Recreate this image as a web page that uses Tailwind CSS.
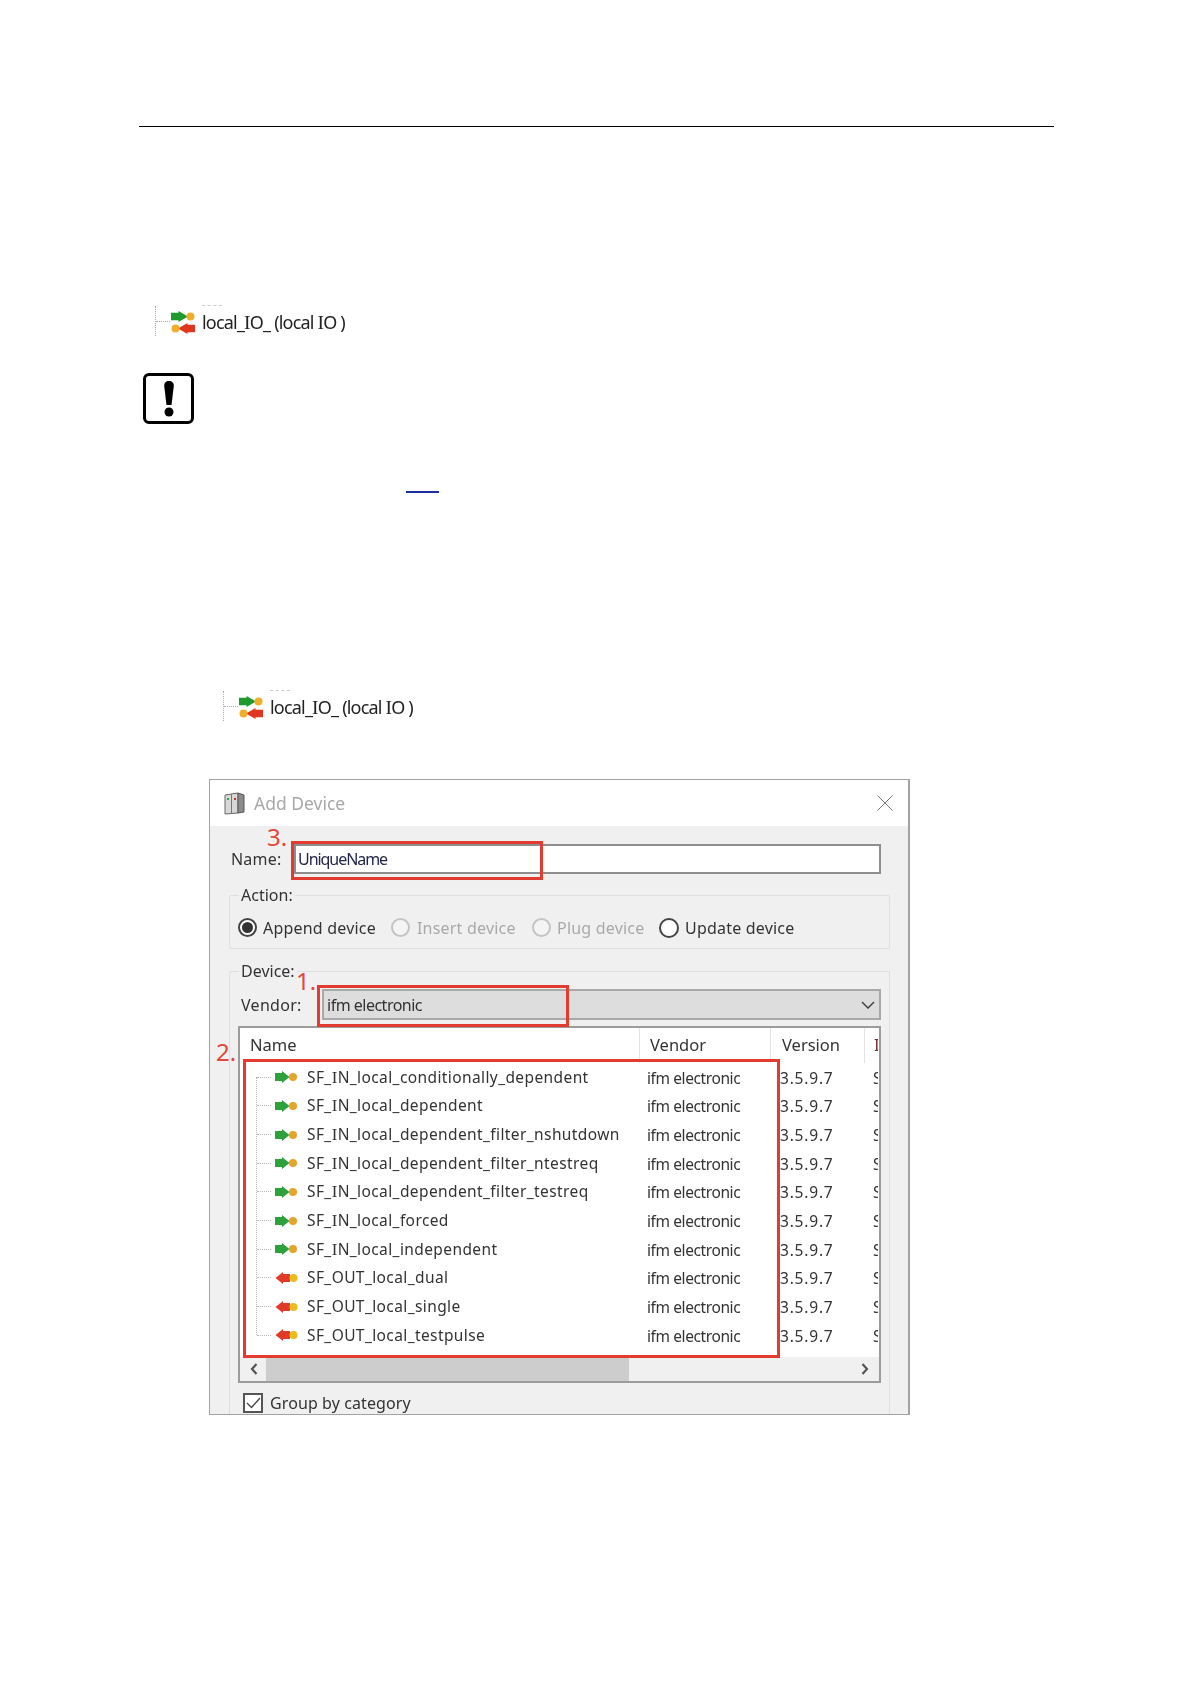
<!DOCTYPE html>
<html lang="en">
<head>
<meta charset="UTF-8">
<meta name="viewport" content="width=device-width, initial-scale=1.0">
<title>Add Device</title>
<script src="https://cdn.jsdelivr.net/npm/@tailwindcss/browser@4"></script>
</head>
<body class="bg-white font-['Noto_Sans',sans-serif]">
<svg class="hidden">
  <symbol id="io-icon" viewBox="0 0 24 24">
    <path d="M0 1.800h7.500V0L17 5.500 7.500 11V9.200H0z" fill="#1f9a2e"/>
    <circle cx="19.500" cy="5.500" r="4" fill="#eeb02a"/>
    <path d="M24 13.800h-7.500V12L7 17.500l9.500 5.500v-1.800H24z" fill="#e0361f"/>
    <circle cx="4.500" cy="17.500" r="4" fill="#eeb02a"/>
  </symbol>
  <symbol id="in-icon" viewBox="0 0 24 12">
    <path d="M1 2h7V0l7.500 6L8 12v-2H1z" fill="#2ba33a"/>
    <circle cx="19" cy="6" r="4" fill="#e3a52c"/>
  </symbol>
  <symbol id="out-icon" viewBox="0 0 24 12">
    <path d="M16 2H9V0L1.500 6 9 12v-2h7z" fill="#e23a2a"/>
    <circle cx="19.500" cy="6" r="4" fill="#e8bb1e"/>
  </symbol>
</svg>

<div class="relative w-[1191px] h-[1683px] overflow-hidden">
  <div class="pt-[126px] px-[139px]">
    <div class="w-[915px] h-px bg-black"></div>
  </div>

  <!-- first tree node -->
  <div class="mt-[179px] ml-[155px] flex items-center h-[30px] border-l border-dotted border-[#aaa] blur-[0.4px]">
    <span class="w-[14px] border-t border-dotted border-[#aaa]"></span>
    <svg class="w-[24px] h-[24px] ml-px mt-[3px]"><use href="#io-icon"/></svg>
    <span class="relative ml-[7px] mt-[3px] text-[18px] text-[#222] tracking-[-0.8px]">local_<span class="font-['Liberation_Serif'] text-[1.08em] leading-none">I</span>O_ (local <span class="font-['Liberation_Serif'] text-[1.08em] leading-none">I</span>O )<span class="absolute left-0 -top-[4px] w-[20px] border-t border-dashed border-[#ccc]"></span></span>
  </div>

  <!-- notice icon and cross reference -->
  <div class="mt-[37px] ml-[143px] w-[51px] h-[51px] border-[3px] border-black rounded-[6px] flex items-center justify-center">
    <svg class="w-[16px] h-[36px]" viewBox="0 0 16 36"><path d="M8 0c3 0 5 2 4.800 5L10.500 24h-5L3.200 5C3 2 5 0 8 0z"/><circle cx="8" cy="31" r="4.500"/></svg>
  </div>
  <div class="mt-[67px] ml-[406px] w-[33px] h-[2px] bg-[#1a2f9c]"></div>

  <!-- second tree node -->
  <div class="mt-[198px] ml-[223px] flex items-center h-[30px] border-l border-dotted border-[#aaa] blur-[0.4px]">
    <span class="w-[14px] border-t border-dotted border-[#aaa]"></span>
    <svg class="w-[24px] h-[24px] ml-px mt-[3px]"><use href="#io-icon"/></svg>
    <span class="relative ml-[7px] mt-[3px] text-[18px] text-[#222] tracking-[-0.8px]">local_<span class="font-['Liberation_Serif'] text-[1.08em] leading-none">I</span>O_ (local <span class="font-['Liberation_Serif'] text-[1.08em] leading-none">I</span>O )<span class="absolute left-0 -top-[4px] w-[20px] border-t border-dashed border-[#ccc]"></span></span>
  </div>

  <!-- Add Device dialog -->
  <div class="mt-[58px] ml-[209px] w-[701px] h-[636px] border border-r-2 border-[#a3a3a3] bg-[#f0f0f0] overflow-hidden blur-[0.4px] text-[#333] text-[16px]">
    <div class="h-[46px] bg-white flex items-center pl-[14px] pr-[15px]">
      <svg class="w-[21px] h-[23px]" viewBox="0 0 21 23">
        <path d="M1 3l13-2v20l-13 1z" fill="#d8d8d8" stroke="#666"/>
        <path d="M14 1l6 2v17l-6 1z" fill="#8c8c8c" stroke="#555"/>
        <path d="M7.500 2v20" stroke="#777"/>
        <rect x="3" y="6" width="2" height="2" fill="#2aa84a"/>
        <rect x="10" y="6" width="2" height="2" fill="#c8342a"/>
      </svg>
      <span class="ml-[9px] text-[17.500px] text-[#a8a8a8]">Add Device</span>
      <svg class="ml-auto w-[16px] h-[16px]" viewBox="0 0 16 16"><path d="M.5.500l15 15M15.500.500l-15 15" stroke="#777" fill="none"/></svg>
    </div>

    <div class="pt-[18px] pl-[21px] pr-[27px] flex items-center">
      <span class="w-[63px] tracking-[0.2px]">Name:</span>
      <div class="flex-1 h-[30px] bg-white border-2 border-[#8e8e8e] flex items-center pl-[2px] text-[#25254a] tracking-[-1.05px]">UniqueName</div>
    </div>

    <fieldset class="mt-[10px] ml-[19px] mr-[18px] h-[65px] border border-[#dfdfdf] rounded-[2px] flex">
      <legend class="ml-[9px] px-[2px] leading-[22px]">Action:</legend>
      <div class="flex items-center h-[43px] pl-[8px] tracking-[0.2px]">
        <span class="w-[19px] h-[19px] rounded-full border-2 border-[#444] bg-white flex items-center justify-center"><span class="w-[11px] h-[11px] rounded-full bg-[#333]"></span></span>
        <span class="ml-[6px] w-[128px]">Append device</span>
        <span class="w-[19px] h-[19px] rounded-full border-2 border-[#c4c4c4] bg-[#f4f4f4]"></span>
        <span class="ml-[7px] w-[115px] text-[#a9a9a9]">Insert device</span>
        <span class="w-[19px] h-[19px] rounded-full border-2 border-[#c4c4c4] bg-[#f4f4f4]"></span>
        <span class="ml-[6px] w-[102px] text-[#a9a9a9]">Plug device</span>
        <span class="w-[20px] h-[20px] rounded-full border-2 border-[#444] bg-white"></span>
        <span class="ml-[6px]">Update device</span>
      </div>
    </fieldset>

    <fieldset class="mt-[11px] ml-[19px] mr-[18px] border border-b-0 border-[#dfdfdf] rounded-[2px] h-[500px]">
      <legend class="ml-[9px] px-[2px] leading-[22px]">Device:</legend>
      <div class="pl-[11px] pr-[8px] flex items-center mt-[7px]">
        <span class="w-[81px] tracking-[0.3px]">Vendor:</span>
        <div class="flex-1 h-[31px] bg-[#dddddd] border-2 border-[#a8a8a8] flex items-center pl-[3px] pr-[4px] tracking-[-0.5px]">
          <span>ifm electronic</span>
          <svg class="ml-auto w-[14px] h-[8px]" viewBox="0 0 14 8"><path d="M1 1l6 6 6-6" stroke="#444" stroke-width="1.500" fill="none"/></svg>
        </div>
      </div>

      <div class="mt-[6px] ml-[8px] mr-[8px] h-[357px] bg-white border-2 border-[#9c9c9c]">
        <div class="h-[329px] overflow-hidden">
          <div class="grid grid-cols-[400px_131px_94px_13px] h-[35px] text-[16.500px] items-center">
            <div class="pl-[10px] border-r border-[#e4e4e4] h-full flex items-center">Name</div>
            <div class="pl-[10px] border-r border-[#e4e4e4] h-full flex items-center">Vendor</div>
            <div class="pl-[11px] border-r border-[#e4e4e4] h-full flex items-center">Version</div>
            <div class="pl-[9px] h-full flex items-center text-[#7a2a2a] overflow-hidden">I</div>
          </div>
          <div class="relative text-[15.500px] tracking-[0.4px]">
            <span class="absolute left-[16px] top-[14px] h-[258px] border-l border-dotted border-[#b5b5b5]"></span>
            <div class="grid grid-cols-[400px_131px_94px_13px] h-[28.670px] items-center">
              <div class="flex items-center pl-[17px] whitespace-nowrap"><span class="w-[14px] border-t border-dotted border-[#b5b5b5]"></span><svg class="w-[24px] h-[12px] ml-[3px]"><use href="#in-icon"/></svg><span class="ml-[9px]">SF_<span class="font-['Liberation_Serif'] text-[1.08em] leading-none">I</span>N_local_conditionally_dependent</span></div>
              <div class="pl-[7px] mt-[2px] tracking-[-0.4px]">ifm electronic</div><div class="pl-[9px] mt-[2px] tracking-[0.8px]">3.5.9.7</div><div class="pl-[8px] mt-[2px] overflow-hidden">S</div>
            </div>
            <div class="grid grid-cols-[400px_131px_94px_13px] h-[28.670px] items-center">
              <div class="flex items-center pl-[17px] whitespace-nowrap"><span class="w-[14px] border-t border-dotted border-[#b5b5b5]"></span><svg class="w-[24px] h-[12px] ml-[3px]"><use href="#in-icon"/></svg><span class="ml-[9px]">SF_<span class="font-['Liberation_Serif'] text-[1.08em] leading-none">I</span>N_local_dependent</span></div>
              <div class="pl-[7px] mt-[2px] tracking-[-0.4px]">ifm electronic</div><div class="pl-[9px] mt-[2px] tracking-[0.8px]">3.5.9.7</div><div class="pl-[8px] mt-[2px] overflow-hidden">S</div>
            </div>
            <div class="grid grid-cols-[400px_131px_94px_13px] h-[28.670px] items-center">
              <div class="flex items-center pl-[17px] whitespace-nowrap"><span class="w-[14px] border-t border-dotted border-[#b5b5b5]"></span><svg class="w-[24px] h-[12px] ml-[3px]"><use href="#in-icon"/></svg><span class="ml-[9px]">SF_<span class="font-['Liberation_Serif'] text-[1.08em] leading-none">I</span>N_local_dependent_filter_nshutdown</span></div>
              <div class="pl-[7px] mt-[2px] tracking-[-0.4px]">ifm electronic</div><div class="pl-[9px] mt-[2px] tracking-[0.8px]">3.5.9.7</div><div class="pl-[8px] mt-[2px] overflow-hidden">S</div>
            </div>
            <div class="grid grid-cols-[400px_131px_94px_13px] h-[28.670px] items-center">
              <div class="flex items-center pl-[17px] whitespace-nowrap"><span class="w-[14px] border-t border-dotted border-[#b5b5b5]"></span><svg class="w-[24px] h-[12px] ml-[3px]"><use href="#in-icon"/></svg><span class="ml-[9px]">SF_<span class="font-['Liberation_Serif'] text-[1.08em] leading-none">I</span>N_local_dependent_filter_ntestreq</span></div>
              <div class="pl-[7px] mt-[2px] tracking-[-0.4px]">ifm electronic</div><div class="pl-[9px] mt-[2px] tracking-[0.8px]">3.5.9.7</div><div class="pl-[8px] mt-[2px] overflow-hidden">S</div>
            </div>
            <div class="grid grid-cols-[400px_131px_94px_13px] h-[28.670px] items-center">
              <div class="flex items-center pl-[17px] whitespace-nowrap"><span class="w-[14px] border-t border-dotted border-[#b5b5b5]"></span><svg class="w-[24px] h-[12px] ml-[3px]"><use href="#in-icon"/></svg><span class="ml-[9px]">SF_<span class="font-['Liberation_Serif'] text-[1.08em] leading-none">I</span>N_local_dependent_filter_testreq</span></div>
              <div class="pl-[7px] mt-[2px] tracking-[-0.4px]">ifm electronic</div><div class="pl-[9px] mt-[2px] tracking-[0.8px]">3.5.9.7</div><div class="pl-[8px] mt-[2px] overflow-hidden">S</div>
            </div>
            <div class="grid grid-cols-[400px_131px_94px_13px] h-[28.670px] items-center">
              <div class="flex items-center pl-[17px] whitespace-nowrap"><span class="w-[14px] border-t border-dotted border-[#b5b5b5]"></span><svg class="w-[24px] h-[12px] ml-[3px]"><use href="#in-icon"/></svg><span class="ml-[9px]">SF_<span class="font-['Liberation_Serif'] text-[1.08em] leading-none">I</span>N_local_forced</span></div>
              <div class="pl-[7px] mt-[2px] tracking-[-0.4px]">ifm electronic</div><div class="pl-[9px] mt-[2px] tracking-[0.8px]">3.5.9.7</div><div class="pl-[8px] mt-[2px] overflow-hidden">S</div>
            </div>
            <div class="grid grid-cols-[400px_131px_94px_13px] h-[28.670px] items-center">
              <div class="flex items-center pl-[17px] whitespace-nowrap"><span class="w-[14px] border-t border-dotted border-[#b5b5b5]"></span><svg class="w-[24px] h-[12px] ml-[3px]"><use href="#in-icon"/></svg><span class="ml-[9px]">SF_<span class="font-['Liberation_Serif'] text-[1.08em] leading-none">I</span>N_local_independent</span></div>
              <div class="pl-[7px] mt-[2px] tracking-[-0.4px]">ifm electronic</div><div class="pl-[9px] mt-[2px] tracking-[0.8px]">3.5.9.7</div><div class="pl-[8px] mt-[2px] overflow-hidden">S</div>
            </div>
            <div class="grid grid-cols-[400px_131px_94px_13px] h-[28.670px] items-center">
              <div class="flex items-center pl-[17px] whitespace-nowrap"><span class="w-[14px] border-t border-dotted border-[#b5b5b5]"></span><svg class="w-[24px] h-[12px] ml-[3px]"><use href="#out-icon"/></svg><span class="ml-[9px]">SF_OUT_local_dual</span></div>
              <div class="pl-[7px] mt-[2px] tracking-[-0.4px]">ifm electronic</div><div class="pl-[9px] mt-[2px] tracking-[0.8px]">3.5.9.7</div><div class="pl-[8px] mt-[2px] overflow-hidden">S</div>
            </div>
            <div class="grid grid-cols-[400px_131px_94px_13px] h-[28.670px] items-center">
              <div class="flex items-center pl-[17px] whitespace-nowrap"><span class="w-[14px] border-t border-dotted border-[#b5b5b5]"></span><svg class="w-[24px] h-[12px] ml-[3px]"><use href="#out-icon"/></svg><span class="ml-[9px]">SF_OUT_local_single</span></div>
              <div class="pl-[7px] mt-[2px] tracking-[-0.4px]">ifm electronic</div><div class="pl-[9px] mt-[2px] tracking-[0.8px]">3.5.9.7</div><div class="pl-[8px] mt-[2px] overflow-hidden">S</div>
            </div>
            <div class="grid grid-cols-[400px_131px_94px_13px] h-[28.670px] items-center">
              <div class="flex items-center pl-[17px] whitespace-nowrap"><span class="w-[14px] border-t border-dotted border-[#b5b5b5]"></span><svg class="w-[24px] h-[12px] ml-[3px]"><use href="#out-icon"/></svg><span class="ml-[9px]">SF_OUT_local_testpulse</span></div>
              <div class="pl-[7px] mt-[2px] tracking-[-0.4px]">ifm electronic</div><div class="pl-[9px] mt-[2px] tracking-[0.8px]">3.5.9.7</div><div class="pl-[8px] mt-[2px] overflow-hidden">S</div>
            </div>
          </div>
        </div>
        <div class="h-[24px] bg-[#f0f0f0] flex items-center">
          <svg class="ml-[10px] w-[8px] h-[12px]" viewBox="0 0 8 12"><path d="M6.500 1L2 6l4.500 5" stroke="#555" stroke-width="2.200" fill="none"/></svg>
          <div class="ml-[8px] w-[363px] h-full bg-[#cdcdcd]"></div>
          <svg class="ml-auto mr-[10px] w-[8px] h-[12px]" viewBox="0 0 8 12"><path d="M1.500 1L6 6l-4.500 5" stroke="#555" stroke-width="2.200" fill="none"/></svg>
        </div>
      </div>

      <div class="mt-[8px] ml-[13px] flex items-center">
        <span class="w-[20px] h-[20px] border-2 border-[#555] bg-white flex items-center justify-center">
          <svg class="w-[15px] h-[12px]" viewBox="0 0 15 12"><path d="M1 6l4.500 4.500L14 1" stroke="#444" stroke-width="1.300" fill="none"/></svg>
        </span>
        <span class="ml-[7px] tracking-[0.1px]">Group by category</span>
      </div>
    </fieldset>
  </div>

  <!-- red annotations drawn over the dialog -->
  <div class="absolute left-[291px] top-[841px] w-[252px] h-[39px] border-[3px] border-[#e23b30]"></div>
  <div class="absolute left-[317px] top-[985px] w-[252px] h-[42px] border-[3px] border-[#e23b30]"></div>
  <div class="absolute left-[243px] top-[1059px] w-[537px] h-[299px] border-[3px] border-[#e23b30]"></div>
  <span class="absolute left-[267px] top-[825px] text-[24px] leading-[24px] text-[#e2483c]">3.</span>
  <span class="absolute left-[296px] top-[969px] text-[24px] leading-[24px] text-[#e2483c]">1.</span>
  <span class="absolute left-[216px] top-[1040px] text-[24px] leading-[24px] text-[#e2483c]">2.</span>
</div>
</body>
</html>
